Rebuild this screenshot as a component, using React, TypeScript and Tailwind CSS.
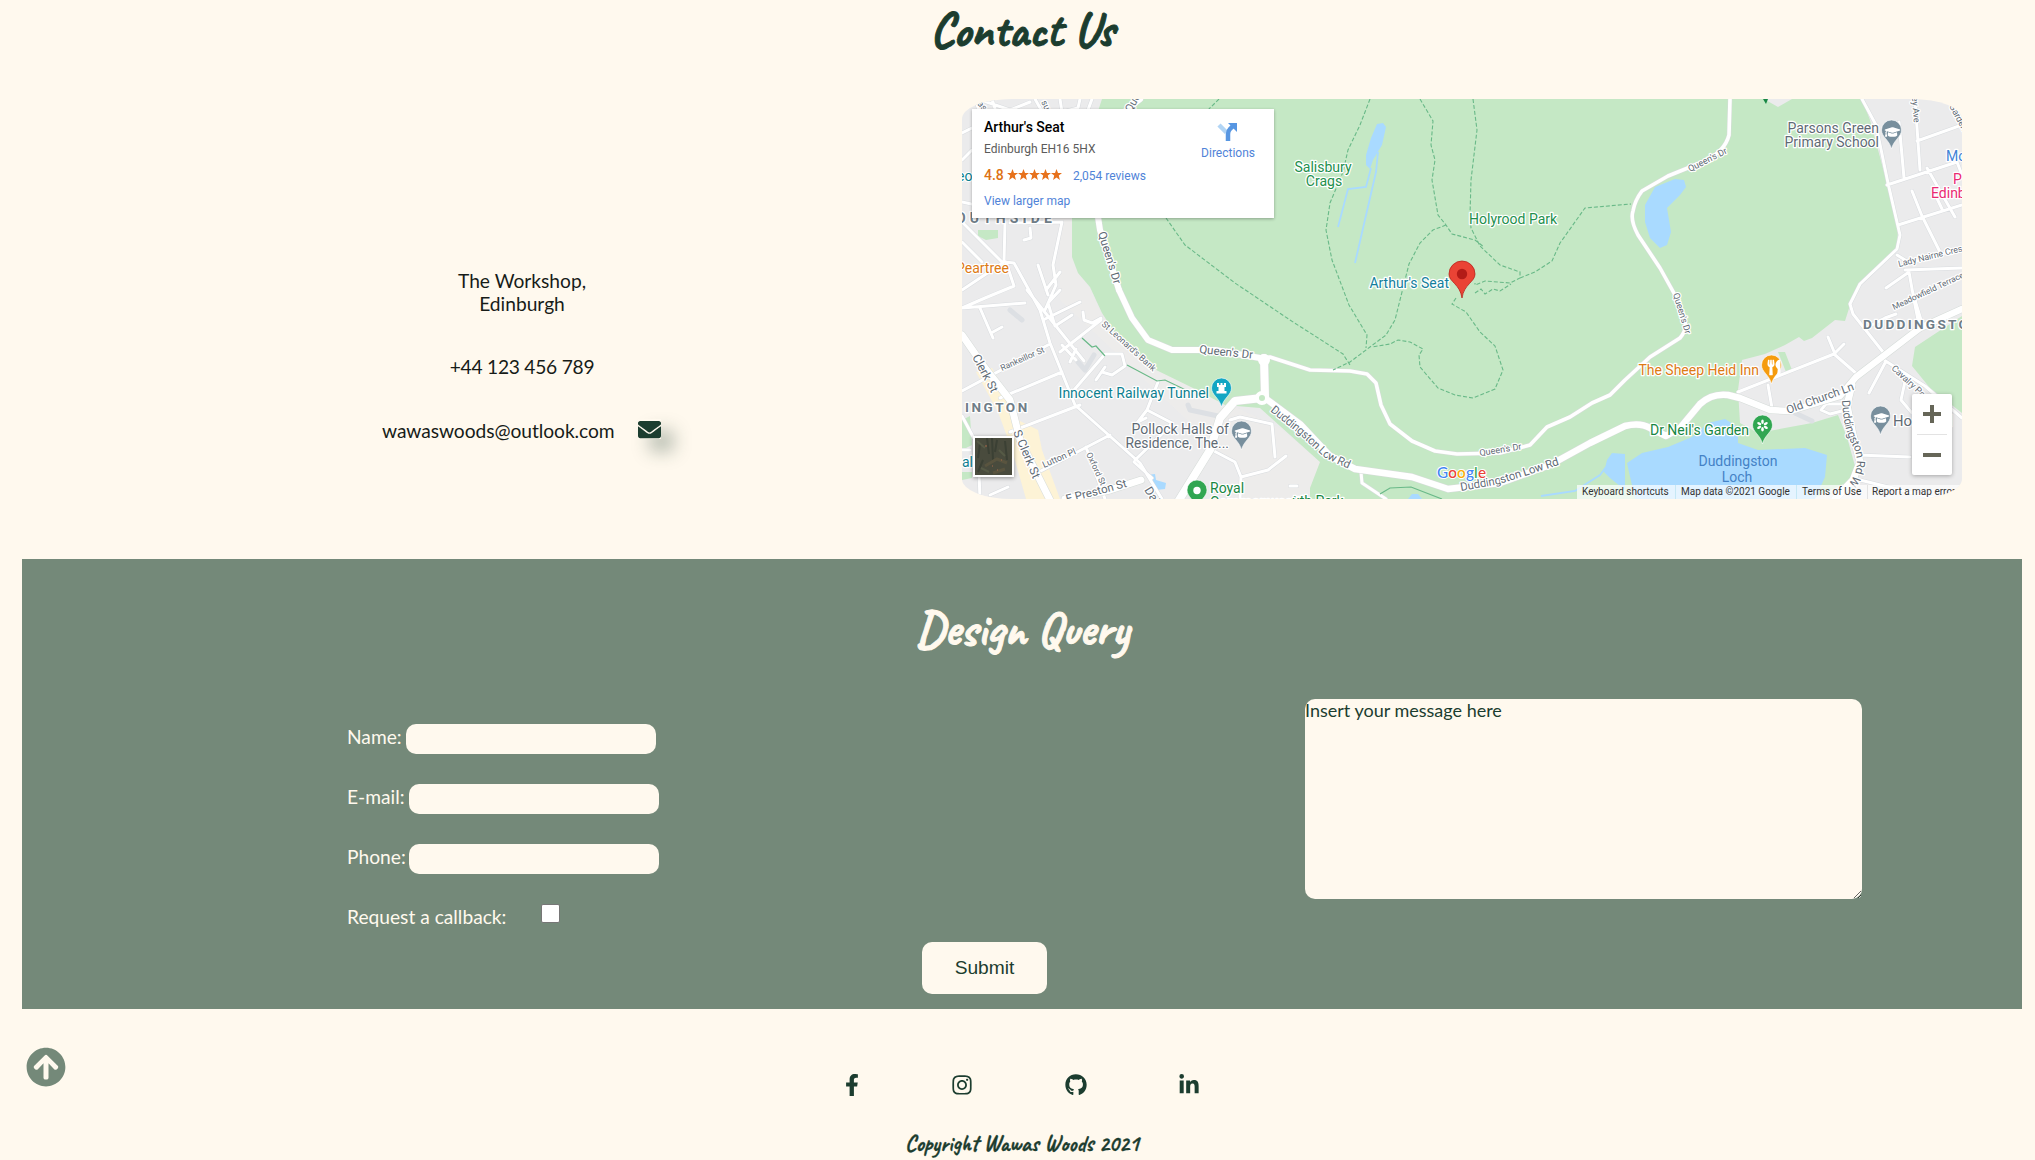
import type { ReactNode } from "react";
import {
  FaArrowCircleUp,
  FaEnvelope,
  FaFacebookF,
  FaGithub,
  FaGraduationCap,
  FaInstagram,
  FaLinkedinIn,
  FaUtensils,
} from "react-icons/fa";

const SCRIPT = "font-['Caveat',cursive] font-bold whitespace-nowrap";

const MINOR_ROADS = [
  "M962 133L978 125L998 118L992 99",
  "M975 99L990 140M978 99L1010 110L1030 102M1035 99L1048 122M1060 99L1062 112L1078 108L1080 99M1092 99L1085 118",
  "M962 160L972 150M962 202L976 205L1005 200M1005 222L1004 262L1014 263L1040 310L1050 343L1075 405L1140 463L1162 499",
  "M962 222L1002 262M962 242L982 262M962 290L1004 262M962 308L985 298L1014 286L1006 262",
  "M1030 228L1031 238L1024 240M1010 223L1062 222L1053 265L1056 285L1045 310M1038 265L1048 295M1060 272L1046 290",
  "M962 308L1025 303M980 308L993 338M993 332L1002 327M1027 290L1084 361M1043 320L1080 302",
  "M1060 290L1048 303L1055 326L1072 315M1083 312L1084 320L1092 323L1101 318",
  "M1101 320L1060 352M1062 345L1076 360M1076 349L1070 362M1074 390L1105 354L1122 354L1125 366L1112 375L1102 372M1105 367L1096 380",
  "M962 391L1048 345M1000 398L1062 372M1010 432L1080 405M1035 474L1110 435M1086 447L1105 499",
  "M1158 382L1147 410L1137 423M1147 410L1172 423L1162 434L1135 460M1146 418L1138 422",
  "M1212 450L1235 462L1241 477L1268 470L1286 456M1241 477L1240 499M1230 420L1240 417L1272 424L1275 457",
  "M962 416L978 446L980 499M962 450L970 450M990 495L1008 487M1134 462L1152 478",
  "M1290 486L1297 486M1361 472L1362 483L1386 499",
  "M1862 99L1876 125L1888 183L1900 235L1897 249L1860 284L1850 304L1853 314L1883 352",
  "M1915 99L1920 170M1899 122L1904 178M1917 141L1962 125M1887 185L1957 162L1962 175",
  "M1898 225L1962 205M1912 191L1922 216L1940 252M1927 168L1955 217M1933 190L1942 209",
  "M1897 255L1910 263L1962 248M1886 288L1909 272L1914 300L1918 320M1905 270L1962 268",
  "M1738 392L1834 354L1858 375M1828 337L1835 354M1844 344L1834 354M1768 385L1772 408",
  "M1884 360L1925 386L1962 418M1885 363L1869 393M1906 377L1901 400L1912 413L1925 400M1850 404L1826 404L1821 410L1830 414L1850 409",
  "M1858 455L1910 457M1860 480L1962 505",
  "M1896 314L1885 318L1870 326M1912 290L1921 320",
];

const MAIN_ROADS = [
  { d: "M1119 290L1132 318L1148 340L1172 350L1215 350L1260 358", w: 6 },
  { d: "M1260 358L1270 357L1310 370L1350 371L1367 374L1376 383L1381 405L1390 424L1412 441L1435 451L1457 454L1500 453L1530 445L1547 427L1570 417L1592 403L1610 395L1625 380L1650 357L1680 338Q1687 330 1685 322L1675 295L1660 268L1638 235Q1630 220 1633 211Q1635 200 1642 191L1668 176L1705 161Q1725 151 1729 135L1730 99", w: 3.6 },
  { d: "M1119 290L1100 230L1090 165L1100 135L1132 105L1140 99", w: 6 },
  { d: "M962 335L985 368L1010 400L1020 440L1050 500", w: 7 },
  { d: "M1264 358L1265 397M1262 398L1235 401L1220 418L1210 450L1176 505", w: 8 },
  { d: "M1265 398L1300 424L1330 456L1355 469L1412 477L1448 489L1500 483L1550 465L1590 443L1625 426Q1640 422 1650 428L1666 436L1680 428L1700 404Q1712 393 1728 395L1740 398L1770 410L1790 411L1840 396L1856 377L1920 328L1962 309", w: 6.5 },
  { d: "M1852 385L1847 405L1853 435L1860 462L1853 480L1835 499", w: 7 },
  { d: "M1065 499L1110 490L1141 480", w: 7 },
];

const TRAILS =
  "M1219 99L1206 112M1166 218L1185 245L1235 283L1290 320L1343 354L1350 365M1370 99L1360 125L1348 150L1343 172L1330 203L1326 230L1332 260L1349 305L1367 335L1366 348M1420 99L1433 121L1431 145L1435 160L1432 180L1438 215L1446 225L1452 234L1475 240L1484 247M1446 225L1433 230L1420 243L1409 264L1400 300L1395 320L1386 335L1370 347L1350 362L1333 370M1473 99L1477 130L1471 180L1470 215L1471 228L1480 246L1500 265L1520 272L1520 278L1510 283L1485 281L1475 285L1475 283M1520 278L1535 272L1552 261L1560 243L1585 208L1631 204M1475 293L1481 289L1485 294L1493 289L1500 291L1511 284M1456 298L1452 304L1466 312L1480 332L1495 346L1503 370L1495 389L1473 398L1455 395L1438 388L1420 367L1419 355L1423 349L1410 342L1398 340L1390 344L1372 347";

function Tag({ x, y, size = 14, color = "#5f6b75", rotate = 0, anchor = "start", spacing = 0, bold = false, children }: {
  x: number; y: number; size?: number; color?: string; rotate?: number;
  anchor?: "start" | "middle" | "end"; spacing?: number; bold?: boolean; children: ReactNode;
}) {
  return (
    <text x={x} y={y} fontSize={size} fill={color} textAnchor={anchor} letterSpacing={spacing}
      fontWeight={bold ? 700 : 400} stroke="#fff" strokeWidth={2.5} strokeLinejoin="round" paintOrder="stroke"
      transform={rotate ? `rotate(${rotate} ${x} ${y})` : undefined}>
      {children}
    </text>
  );
}

function Pin({ x, y, color, children }: { x: number; y: number; color: string; children?: ReactNode }) {
  return (
    <g transform={`translate(${x} ${y})`}>
      <path d="M0 29C-2 20-10 17-10 10A10 10 0 0 1 10 10C10 17 2 20 0 29Z" fill={color} stroke="#fff" strokeWidth="0.6" />
      {children}
    </g>
  );
}

function MapDrawing() {
  return (
    <svg className="block h-[400px] w-[1000px] font-['Roboto',sans-serif]" viewBox="962 99 1000 400">
      <rect x="962" y="99" width="1000" height="400" fill="#ebebec" />
      <path d="M1090 99L1072 218V257L1078 273L1090 288L1102 315L1152 368L1280 428L1320 462L1310 499H1240V470L1060 300V218Z" fill="#eeeceb" opacity="0.6" />
      <path d="M1102 99L1085 150L1072 218V257L1078 273L1090 287L1102 313L1115 333L1152 368L1195 389L1225 405L1260 408L1320 462L1310 488V499H1812L1858 477L1847 437L1838 415L1812 423L1758 433L1740 423L1738 390L1742 360L1765 354L1785 345L1799 337L1804 341L1812 338L1835 320L1845 321L1852 299L1858 287L1897 249L1898 230L1887 183L1870 120L1862 99Z" fill="#c5e8c5" />
      <path d="M1764 99H1792L1778 107Z" fill="#ebebec" />
      <path d="M1778 352L1785 352L1792 370L1786 372Z M1915 347L1962 316V413L1930 388L1912 366Z M978 230H998V238L986 240L978 236Z M962 420L970 416L972 445L962 450Z M962 472H972V478L962 480Z" fill="#c5e8c5" />
      <path d="M976 372L992 368L1005 392L1018 420L1038 430L1042 450L1060 499H1026L1012 450L998 412Z" fill="#fdf3d6" />
      <g fill="#a9daff">
        <path d="M1377 124L1383 123L1386 127L1382 145L1373 160L1370 169L1366 165L1366 155L1371 138Z" />
        <path d="M1645 205L1655 187L1675 179L1684 180L1686 187L1680 195L1667 208L1669 220L1671 232L1667 245L1660 248L1650 238L1645 222Z" />
        <path d="M1627 463L1642 453L1668 447L1692 437L1708 423L1725 419L1738 427V443L1758 450L1805 448L1827 455L1825 477L1815 499H1635Z" />
        <path d="M1607 460L1612 453L1625 454V490L1610 478L1604 472Z M1408 499L1412 494H1418L1422 499Z M1147 475L1155 474L1156 480L1166 483L1165 489L1156 490Z" />
      </g>
      <path d="M1371 168L1366 187L1348 189L1338 227M1378 152L1376 172L1355 263M1541 496L1575 491L1600 475L1606 467" fill="none" stroke="#a9daff" strokeWidth="1.8" />
      <g fill="none" strokeLinecap="round" strokeLinejoin="round">
        <path d="M1078 362L1085 370L1094 355M1010 310L1022 320M1188 405L1190 410L1218 416M1795 413L1812 421" stroke="#dde0e4" strokeWidth="5" />
        <path d={MINOR_ROADS.join("")} stroke="#d9dcdf" strokeWidth="4" />
        <path d={MINOR_ROADS.join("")} stroke="#fff" strokeWidth="3" />
        {MAIN_ROADS.map((road) => <path key={road.d} d={road.d} stroke="#d6dcd9" strokeWidth={road.w + 1} />)}
        {MAIN_ROADS.map((road) => <path key={`${road.d}-fill`} d={road.d} stroke="#fff" strokeWidth={road.w} />)}
        <circle cx="1264" cy="360" r="4" stroke="#fff" strokeWidth="4" fill="#fff" />
        <circle cx="1262" cy="398" r="5" stroke="#fff" strokeWidth="4" fill="#c5e8c5" />
      </g>
      <path d={TRAILS} fill="none" stroke="#69b988" strokeWidth="1.1" strokeDasharray="4 2" />
      <path d="M1082 338L1092 347L1096 346L1105 356M1127 365L1157 381L1165 380L1190 392M1380 494L1390 488L1411 487L1442 499" fill="none" stroke="#69b988" strokeWidth="1.2" />

      <Tag x={956} y={223} color="#6f7d88" spacing={4.1} bold>OUTHSIDE</Tag>
      <Tag x={965} y={412} size={13.5} color="#6f7d88" spacing={2.5} bold>INGTON</Tag>
      <Tag x={1863} y={329} size={13.6} color="#6f7d88" spacing={2.3} bold>DUDDINGSTON</Tag>
      <Tag x={957} y={181} color="#0d7f90">eo</Tag>
      <Tag x={956} y={273} color="#dd7a15">Peartree</Tag>
      <Tag x={962} y={467} color="#0d7f90">al</Tag>
      <Tag x={977} y={104} size={9} rotate={50}>as</Tag>
      <Tag x={1041} y={102} size={9} rotate={65}>su</Tag>
      <Tag x={1131} y={113} size={11} rotate={-60}>Queen</Tag>
      <Tag x={1098} y={233} size={11.5} rotate={73}>Queen's Dr</Tag>
      <Tag x={1199} y={353} size={11.5} rotate={6}>Queen's Dr</Tag>
      <Tag x={972} y={357} size={12} rotate={62}>Clerk St</Tag>
      <Tag x={1013} y={432} size={12} rotate={67}>S Clerk St</Tag>
      <Tag x={1002} y={371} size={8.5} rotate={-24}>Rankeillor St</Tag>
      <Tag x={1101} y={325} size={8.8} rotate={42}>St Leonard's Bank</Tag>
      <Tag x={1044} y={468} size={9} rotate={-24}>Lutton Pl</Tag>
      <Tag x={1086} y={454} size={8.5} rotate={65}>Oxford St</Tag>
      <Tag x={1067} y={503} size={11.5} rotate={-15}>E Preston St</Tag>
      <Tag x={1144} y={490} size={12} rotate={58}>Dalkeith</Tag>
      <Tag x={1480} y={456} size={9} rotate={-9}>Queen's Dr</Tag>
      <Tag x={1690} y={172} size={9} rotate={-27}>Queen's Dr</Tag>
      <Tag x={1673} y={294} size={9} rotate={73}>Queen's Dr</Tag>
      <Tag x={1912} y={97} size={9} rotate={86}>ey Ave</Tag>
      <Tag x={1949} y={106} size={9} rotate={62}>Gardens</Tag>
      <Tag x={1899} y={267} size={8.7} rotate={-14}>Lady Nairne Cres</Tag>
      <Tag x={1894} y={310} size={8.4} rotate={-25}>Meadowfield Terrace</Tag>
      <Tag x={1891} y={369} size={9} rotate={43}>Cavalry Park Dr</Tag>
      <Tag x={1788} y={414} size={11.4} rotate={-20}>Old Church Ln</Tag>
      <defs>
        <path id="low-road-west" d="M1270 411L1300 435L1325 458L1360 474" />
        <path id="low-road-east" d="M1461 491L1500 484L1565 463" />
        <path id="road-south" d="M1842 400Q1843 430 1854 448Q1862 468 1848 484L1835 499" />
      </defs>
      <g fontSize="11.5" fill="#5f6b75" stroke="#fff" strokeWidth="2.5" paintOrder="stroke" strokeLinejoin="round">
        <text><textPath href="#low-road-west" textLength="98">Duddingston Low Rd</textPath></text>
        <text><textPath href="#low-road-east" textLength="102">Duddingston Low Rd</textPath></text>
        <text><textPath href="#road-south" textLength="88">Duddingston Rd W</textPath></text>
      </g>

      <Tag x={1323} y={172} color="#23904d" anchor="middle">Salisbury</Tag>
      <Tag x={1324} y={186} color="#23904d" anchor="middle">Crags</Tag>
      <Tag x={1469} y={224} color="#23904d">Holyrood Park</Tag>
      <Tag x={1449} y={288} color="#147f9c" anchor="end">Arthur's Seat</Tag>
      <Tag x={1209} y={398} color="#0d7f90" anchor="end">Innocent Railway Tunnel</Tag>
      <Tag x={1229} y={434} anchor="end">Pollock Halls of</Tag>
      <Tag x={1229} y={448} anchor="end" size={13.8}>Residence, The...</Tag>
      <Tag x={1210} y={493} color="#188744">Royal</Tag>
      <Tag x={1210} y={507} color="#188744">Commonwealth</Tag>
      <Tag x={1292} y={506} color="#188744">uth Park</Tag>
      <Tag x={1879} y={133} anchor="end">Parsons Green</Tag>
      <Tag x={1879} y={147} anchor="end">Primary School</Tag>
      <Tag x={1759} y={375} color="#dd7a15" anchor="end">The Sheep Heid Inn</Tag>
      <Tag x={1749} y={435} color="#188744" anchor="end">Dr Neil's Garden</Tag>
      <Tag x={1893} y={426} size={14.8}>Holyrood</Tag>
      <Tag x={1946} y={161} color="#3f83d6">Mo</Tag>
      <Tag x={1953} y={184} color="#ea2a72">P</Tag>
      <Tag x={1931} y={198} color="#ea2a72">Edinb</Tag>
      <g fontSize="14" fill="#4482c6" textAnchor="middle">
        <text x="1738" y="466">Duddingston</text>
        <text x="1737" y="482">Loch</text>
      </g>

      <Pin x={1221.5} y={378} color="#13a6c3">
        <path d="M-4.5 5H-2.4V7H-1V5H1V7H2.4V5H4.5V9H3V13H5V15.5H-5V13H-3V9H-4.5Z" fill="#fff" />
      </Pin>
      <Pin x={1241.5} y={421} color="#788f9d"><FaGraduationCap x={-7} y={4} width={14} height={12} fill="#fff" /></Pin>
      <Pin x={1891.5} y={120} color="#788f9d"><FaGraduationCap x={-7} y={4} width={14} height={12} fill="#fff" /></Pin>
      <Pin x={1880.5} y={406} color="#788f9d"><FaGraduationCap x={-7} y={4} width={14} height={12} fill="#fff" /></Pin>
      <Pin x={1771.5} y={355} color="#f59b0d"><FaUtensils x={-5.5} y={4.5} width={11} height={11} fill="#fff" /></Pin>
      <Pin x={1762.5} y={415} color="#31a652">
        {[0, 60, 120, 180, 240, 300].map((angle) => <ellipse key={angle} cx="0" cy="6.7" rx="1.3" ry="2.2" fill="#fff" transform={`rotate(${angle} 0 10.5)`} />)}
      </Pin>
      <Pin x={1197} y={480} color="#31a652"><circle cx="0" cy="10.5" r="3.7" fill="#fff" /></Pin>
      <path d="M1763 99H1768L1766 104Z" fill="#188744" />
      <path d="M1462 298C1460 284 1449 282 1449 274A13 13 0 0 1 1475 274C1475 282 1464 284 1462 298Z" fill="#ea4335" stroke="#b9231c" strokeWidth="0.8" />
      <circle cx="1462" cy="274" r="5.2" fill="#b31b17" />
      <text x="1437" y="478" fontSize="15.3" fontWeight="500" fontFamily="Lato" stroke="#fff" strokeWidth="2" paintOrder="stroke" textLength="49">
        <tspan fill="#4285f4">G</tspan><tspan fill="#ea4335">o</tspan><tspan fill="#fbac05">o</tspan><tspan fill="#4285f4">g</tspan><tspan fill="#34a853">l</tspan><tspan fill="#ea4335">e</tspan>
      </text>
    </svg>
  );
}

function PlaceCard() {
  return (
    <div className="absolute left-[10px] top-[10px] flex h-[109px] w-[302px] justify-between bg-white pl-3 pr-[19px] font-['Roboto',sans-serif] shadow-[0_1px_3px_rgba(0,0,0,0.3)]">
      <div className="flex flex-col whitespace-nowrap">
        <div className="mt-[9px] text-[14px] font-medium leading-[19px] text-black">Arthur's Seat</div>
        <div className="mt-[4px] text-[12px] leading-4 text-[#5b5b5b]">Edinburgh EH16 5HX</div>
        <div className="mt-[9px] flex h-[18px] items-center">
          <span className="w-[23px] text-[14px] font-medium text-[#dd7215]">4.8</span>
          <svg className="h-[12px] w-[55px]" viewBox="0 0 55 12" fill="#e7711b">
            {[0, 11, 22, 33, 44].map((left) => <path key={left} transform={`translate(${left} 0)`} d="M5.5 0L7 4H11L7.8 6.6L8.9 11L5.5 8.5L2.1 11L3.2 6.6L0 4H4Z" />)}
          </svg>
          <span className="ml-[11px] pt-px text-[12px] text-[#5083d8]">2,054 reviews</span>
        </div>
        <div className="mt-[9px] text-[12px] leading-4 text-[#5083d8]">View larger map</div>
      </div>
      <div className="flex flex-col items-center pt-3">
        <svg className="h-[22px] w-[22px]" viewBox="0 0 22 22">
          <path d="M2 4L9.5 11.5" stroke="#b2d5f5" strokeWidth="4.5" />
          <path d="M11 20V13Q11 10 13 8L16 5" fill="none" stroke="#5796e2" strokeWidth="4.5" />
          <path d="M11 2H20V11Z" fill="#5796e2" />
        </svg>
        <div className="mt-[2px] text-[12px] leading-4 text-[#5083d8]">Directions</div>
      </div>
    </div>
  );
}

function MapPanel() {
  return (
    <div className="relative ml-[962px] mt-[39px] h-[400px] w-[1000px] overflow-hidden rounded-[5%]">
      <MapDrawing />
      <PlaceCard />
      <div className="absolute left-[11px] top-[337px] h-[41px] w-[41px] border-2 border-white bg-[#494b3d] shadow-[0_1px_4px_rgba(0,0,0,0.4)]">
        <svg className="h-full w-full" viewBox="0 0 37 37" fill="none">
          <path d="M12 0L14 16M17 0L18 22M22 2L20 14M5 6L3 20M30 3L32 22M8 22L3 34" stroke="#3b4034" strokeWidth="2" />
          <path d="M10 28L22 21L32 25M18 35L30 31" stroke="#59543f" strokeWidth="3" />
          <path d="M2 3L10 10M24 12L30 18M6 30L14 34" stroke="#565a46" strokeWidth="2" />
          <path d="M10 8h2M17 28h1M26 22h1M22 32h1" stroke="#a6684b" strokeWidth="1" />
        </svg>
      </div>
      <div className="absolute left-[950px] top-[295px] flex h-[81px] w-10 flex-col items-center rounded-[2px] bg-white shadow-[0_1px_4px_rgba(0,0,0,0.3)]">
        <svg className="h-[81px] w-10" viewBox="0 0 40 81">
          <path d="M11 20H29M20 11V29M11 61H29" stroke="#666658" strokeWidth="4" />
          <path d="M5 40.5H35" stroke="#e3e3e3" />
        </svg>
      </div>
      <div className="absolute bottom-0 left-[615px] flex h-[14px] w-[385px] items-center whitespace-nowrap bg-white/70 font-['Roboto',sans-serif] text-[10px] leading-[14px] text-[#333]">
        <span className="w-[98px] pl-[5px]">Keyboard shortcuts</span>
        <span className="w-[121px] border-l border-[#c5e8f5] pl-[5px]">Map data ©2021 Google</span>
        <span className="w-[71px] border-l border-[#c5e8f5] pl-[5px]">Terms of Use</span>
        <span className="border-l border-[#e3e3e3] pl-[4px]">Report a map error</span>
      </div>
    </div>
  );
}

function Field({ label, labelWidth }: { label: string; labelWidth: string }) {
  return (
    <div className="flex h-[30px]">
      <label className={`${labelWidth} whitespace-nowrap leading-[26px]`}>{label}</label>
      <input className="h-[30px] w-[250px] rounded-[10px] bg-[#fff9ee]" />
    </div>
  );
}

export default function App() {
  return (
    <main className="flex h-[1160px] w-[2035px] flex-col overflow-hidden bg-[#fff9ee] font-['Lato',sans-serif] text-[#1c3d2f]">
      <h1 className={`${SCRIPT} flex h-[60px] w-[2044px] shrink-0 items-center justify-center text-[48px] leading-[60px] [-webkit-text-stroke:1px_#1c3d2f]`}>
        Contact Us
      </h1>
      <div className="relative h-[499px] shrink-0">
        <MapPanel />
        <address className="absolute left-[322px] top-[209px] w-[400px] text-center text-[19.2px] not-italic leading-[23px] text-[#171c18]">
          <p>The Workshop,<br />Edinburgh</p>
          <p className="mt-[40px] tracking-[-0.25px]">+44 123 456 789</p>
          <p className="mt-[41px] flex items-center pl-[60px] tracking-[-0.05px]">
            wawaswoods@outlook.com
            <span className="-mt-[3px] ml-[23px] flex h-[20px] items-center shadow-[12px_12px_18px_rgba(28,61,47,0.35)]">
              <FaEnvelope className="h-[23px] w-[23px] text-[#1c3d2f]" />
            </span>
          </p>
        </address>
      </div>
      <section className="ml-[22px] flex h-[450px] w-[2000px] shrink-0 flex-col bg-[#748979] text-[#fff9ee]">
        <h2 className={`${SCRIPT} mt-[40px] flex h-[60px] w-[2000px] items-center justify-center text-[48px] [-webkit-text-stroke:1px_#fff9ee]`}>
          Design Query
        </h2>
        <form className="flex flex-1 flex-col">
          <div className="flex h-[245px]">
            <div className="ml-[325px] mt-[65px] flex w-[400px] flex-col gap-[30px] text-[19.2px]">
              <Field label="Name:" labelWidth="w-[59px]" />
              <Field label="E-mail:" labelWidth="w-[62px]" />
              <Field label="Phone:" labelWidth="w-[62px]" />
              <div className="flex h-[30px]">
                <label className="w-[194px] leading-[26px]">Request a callback:</label>
                <input type="checkbox" className="h-[19px] w-[19px] appearance-none rounded-[2px] border border-[#767676] bg-white" />
              </div>
            </div>
            <textarea className="ml-[558px] mt-[40px] h-[200px] w-[557px] rounded-[10px] bg-[#fff9ee] text-[18px] leading-[22px] text-[#1c3d2f] placeholder:text-[#1c3d2f]" placeholder="Insert your message here" />
          </div>
          <button type="button" className="ml-[900px] mt-[38px] h-[52px] w-[125px] shrink-0 rounded-[10px] bg-[#fff9ee] font-['Liberation_Sans',sans-serif] text-[19.2px] text-[#1c3d2f]">Submit</button>
        </form>
      </section>
      <footer className="relative flex flex-1 flex-col">
        <a className="absolute left-[26px] top-[38px] text-[#748979]"><FaArrowCircleUp className="h-[40px] w-[40px]" /></a>
        <nav className="ml-[840px] mt-[64px] flex h-6 items-center">
          <a className="flex w-6 justify-center"><FaFacebookF className="h-[22px] w-[22px]" /></a>
          <a className="ml-[86px] flex w-6 justify-center"><FaInstagram className="h-[22px] w-[22px]" /></a>
          <a className="ml-[90px] flex w-6 justify-center"><FaGithub className="h-[22px] w-[22px]" /></a>
          <a className="ml-[89px] flex w-6 justify-center"><FaLinkedinIn className="h-[22px] w-[22px]" /></a>
        </nav>
        <p className={`${SCRIPT} mt-[33px] flex w-[2044px] justify-center text-[22.4px] leading-[28px] [-webkit-text-stroke:0.3px_#1c3d2f]`}>
          Copyright Wawas Woods 2021
        </p>
      </footer>
    </main>
  );
}
